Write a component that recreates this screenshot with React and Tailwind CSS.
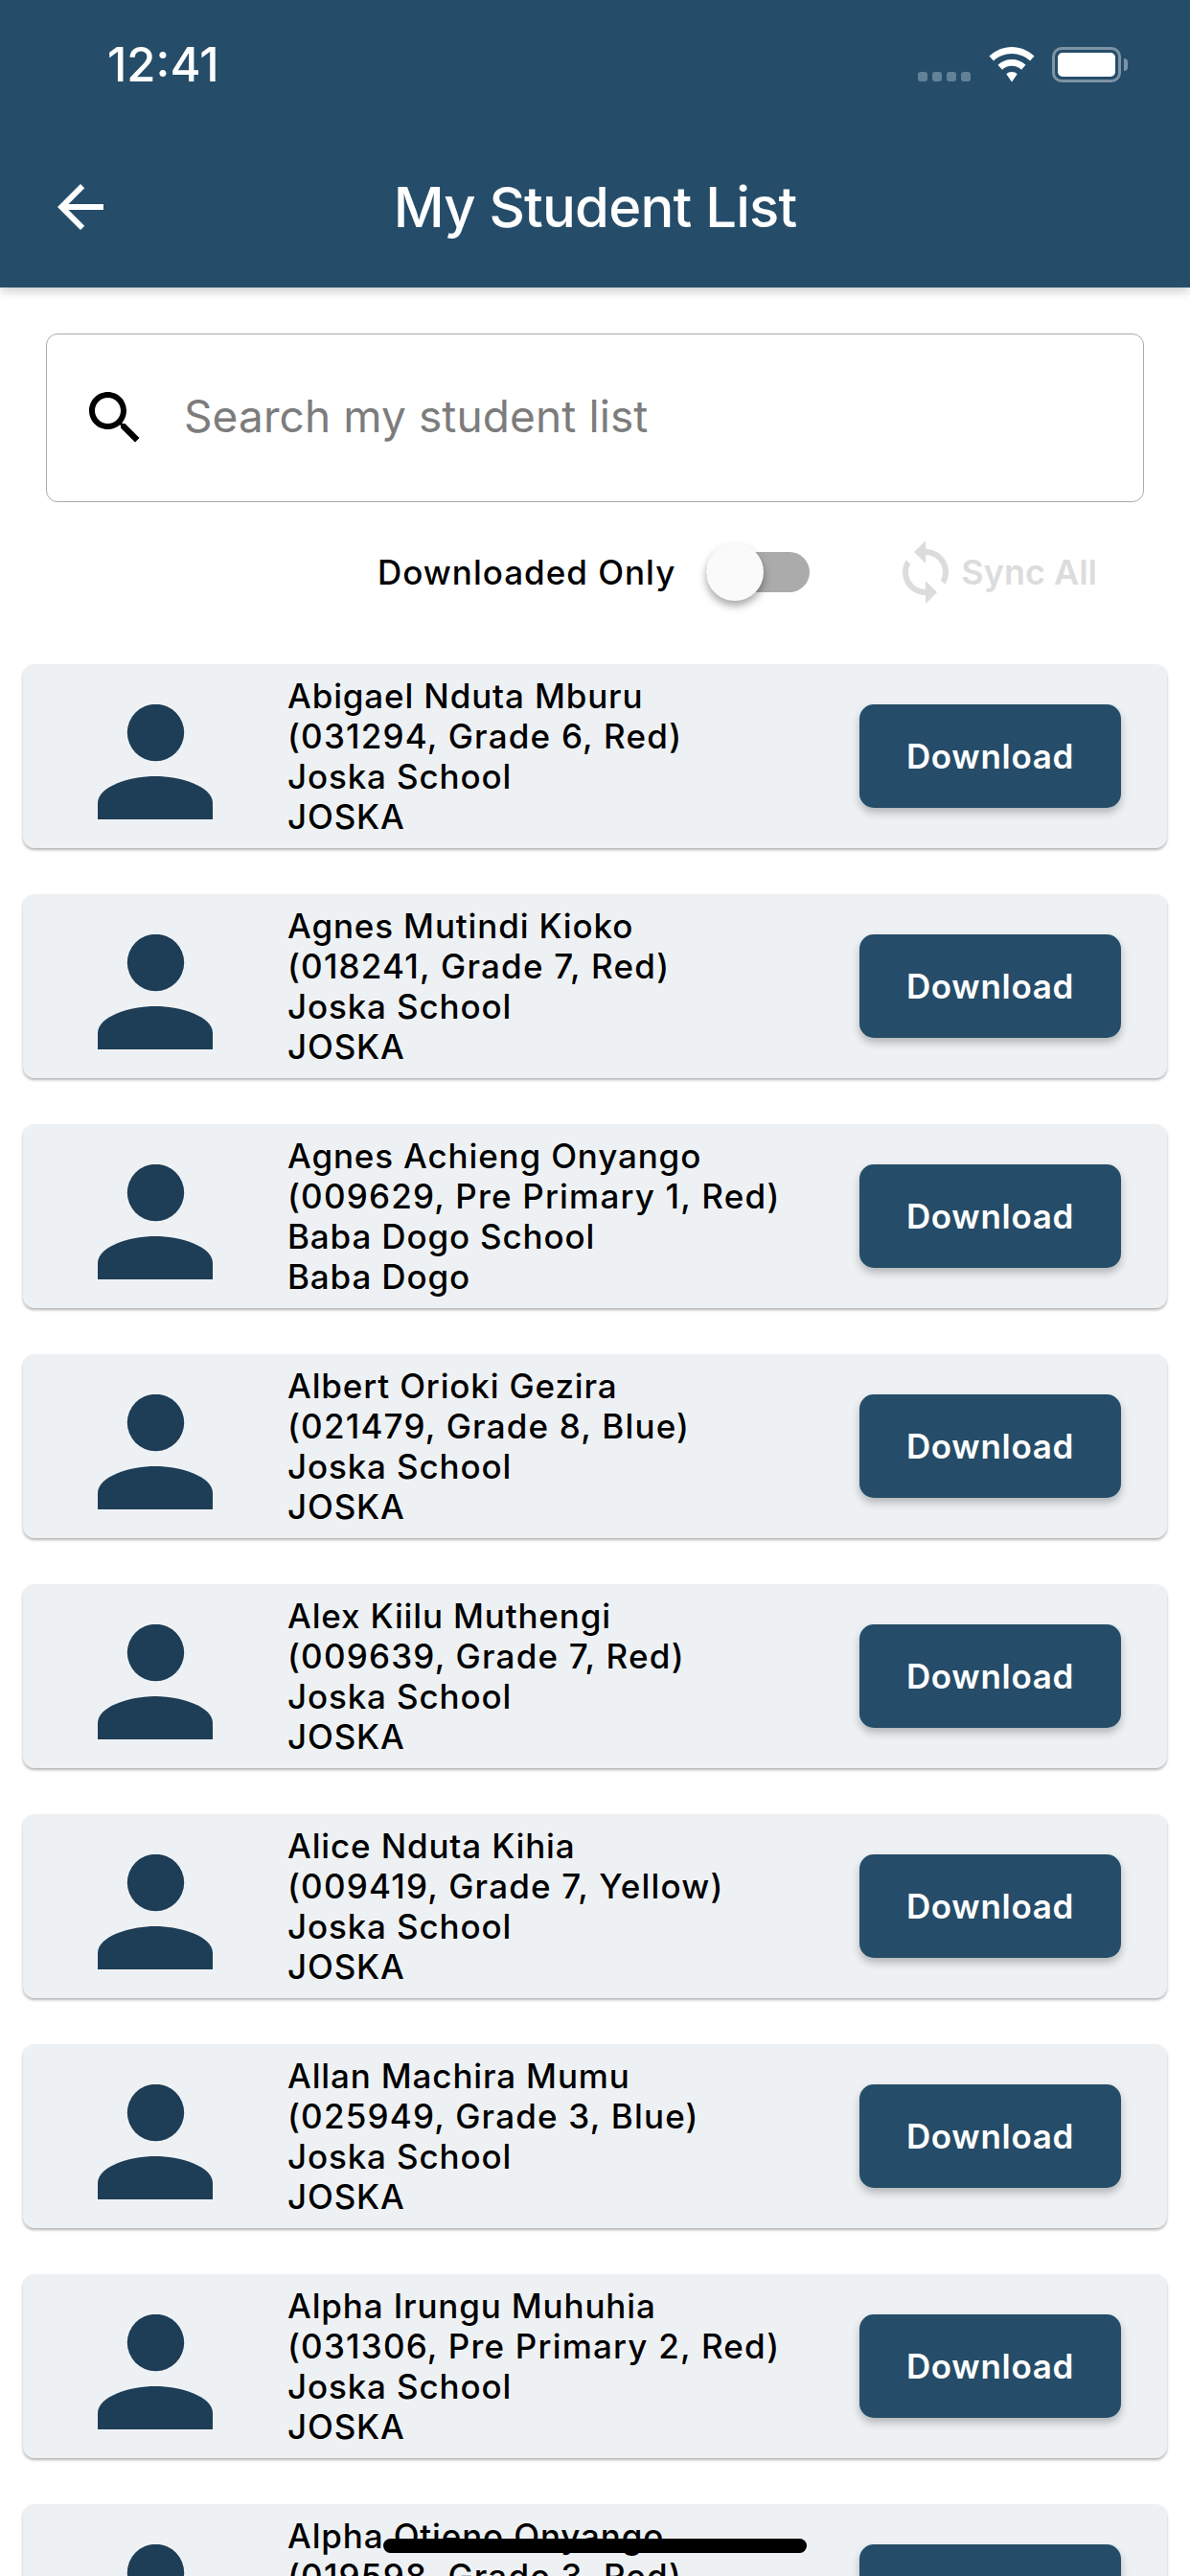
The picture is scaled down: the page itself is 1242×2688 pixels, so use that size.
const students = [
  ["Abigael Nduta Mburu", "(031294, Grade 6, Red)", "Joska School", "JOSKA"],
  ["Agnes Mutindi Kioko", "(018241, Grade 7, Red)", "Joska School", "JOSKA"],
  ["Agnes Achieng Onyango", "(009629, Pre Primary 1, Red)", "Baba Dogo School", "Baba Dogo"],
  ["Albert Orioki Gezira", "(021479, Grade 8, Blue)", "Joska School", "JOSKA"],
  ["Alex Kiilu Muthengi", "(009639, Grade 7, Red)", "Joska School", "JOSKA"],
  ["Alice Nduta Kihia", "(009419, Grade 7, Yellow)", "Joska School", "JOSKA"],
  ["Allan Machira Mumu", "(025949, Grade 3, Blue)", "Joska School", "JOSKA"],
  ["Alpha Irungu Muhuhia", "(031306, Pre Primary 2, Red)", "Joska School", "JOSKA"],
  ["Alpha Otieno Onyango", "(019598, Grade 3, Red)", "Joska School", "JOSKA"],
];

function StudentCard({ lines }) {
  return (
    <div className="flex h-[192px] shrink-0 items-center rounded-[12px] bg-[#eef1f4] pl-[78px] pr-[48px] shadow-[0_2px_3px_rgba(0,0,0,0.3)]">
      <svg width="120" height="120" viewBox="0 0 120 120" className="mt-[12px] shrink-0" fill="#1e3d56">
        <circle cx="60.5" cy="29.5" r="29.7" />
        <path d="M0 120V103C0 85 35 75 60 75C85 75 120 85 120 103V120Z" />
      </svg>
      <div className="ml-[78px] whitespace-nowrap font-['Inter',sans-serif] text-[35px] font-medium leading-[42px] tracking-[0.85px] text-black">
        <div>{lines[0]}</div>
        <div className="tracking-[1.2px]">{lines[1]}</div>
        <div>{lines[2]}</div>
        <div>{lines[3]}</div>
      </div>
      <div className="ml-auto flex h-[108px] w-[273px] shrink-0 items-center justify-center rounded-[15px] bg-[#254d69] font-['Inter',sans-serif] text-[35px] font-semibold tracking-[0.7px] text-white shadow-[0_5px_8px_rgba(0,0,0,0.25)]">
        Download
      </div>
    </div>
  );
}

export default function App() {
  return (
    <div className="relative flex h-[2688px] w-[1242px] flex-col overflow-hidden bg-white">
      <header className="relative z-10 flex h-[300px] shrink-0 flex-col bg-[#254d69] shadow-[0_4px_10px_rgba(0,0,0,0.2)]">
        <div className="flex h-[86px] items-end justify-between pl-[112px] pr-[65px] pt-[40px]">
          <span className="relative top-[5px] font-['Inter',sans-serif] text-[49px] font-medium leading-[46px] text-white">12:41</span>
          <div className="flex items-end">
            <div className="mb-[1px] mr-[19px] flex gap-[5px]">
              <span className="h-[10px] w-[10px] rounded-[3px] bg-[#638299]" />
              <span className="h-[10px] w-[10px] rounded-[3px] bg-[#638299]" />
              <span className="h-[10px] w-[10px] rounded-[3px] bg-[#638299]" />
              <span className="h-[10px] w-[10px] rounded-[3px] bg-[#638299]" />
            </div>
            <svg width="48" height="37" viewBox="0 0 48 37" fill="white" className="mr-[18px]">
              <path d="M24 0C15 0 7 3.600 0.500 9.500L5 14.500C10 9.800 16.800 7 24 7C31.200 7 38 9.800 43 14.500L47.500 9.500C41 3.600 33 0 24 0Z" />
              <path d="M24 13C18.500 13 13.500 15 9.500 18.800L14 23.700C16.600 21.200 20.200 19.800 24 19.800C27.800 19.800 31.400 21.200 34 23.700L38.500 18.800C34.500 15 29.500 13 24 13Z" />
              <path d="M24 26C21.800 26 19.800 26.800 18.300 28.200L24 36.500L29.700 28.200C28.200 26.800 26.200 26 24 26Z" />
            </svg>
            <div className="flex h-[37px] w-[72px] items-center justify-center rounded-[10px] border-[3px] border-[#7d94a5]">
              <div className="h-[25px] w-[60px] rounded-[5px] bg-white" />
            </div>
            <div className="mb-[12px] ml-[3px] h-[13px] w-[4px] rounded-r-[4px] bg-[#7d94a5]" />
          </div>
        </div>
        <div className="mt-[94px] grid grid-cols-[1fr_auto_1fr] items-center px-[48px]">
          <svg width="72" height="72" viewBox="0 0 24 24" fill="white">
            <path d="M20 11H7.830l5.590-5.590L12 4l-8 8 8 8 1.410-1.410L7.830 13H20v-2z" />
          </svg>
          <h1 className="font-['Inter',sans-serif] text-[58px] font-medium leading-[72px] tracking-[-0.8px] text-white">My Student List</h1>
          <div />
        </div>
      </header>

      <div className="mx-[48px] mt-[48px] flex h-[176px] shrink-0 items-center rounded-[12px] border-[1.5px] border-[#ababab] bg-white pl-[35px]">
        <svg width="72" height="72" viewBox="0 0 24 24" fill="black" className="shrink-0">
          <path d="M15.500 14h-.790l-.280-.270C15.410 12.590 16 11.110 16 9.500 16 5.910 13.090 3 9.500 3S3 5.910 3 9.500 5.910 16 9.500 16c1.610 0 3.090-.590 4.230-1.570l.270.280v.790l5 4.990L20.490 19l-4.990-5zm-6 0C7.010 14 5 11.990 5 9.500S7.010 5 9.500 5 14 7.010 14 9.500 11.990 14 9.500 14z" />
        </svg>
        <input
          readOnly
          placeholder="Search my student list"
          className="mb-[3px] ml-[36px] w-[800px] bg-transparent font-['Inter',sans-serif] text-[46px] tracking-[0.1px] text-black outline-none placeholder:text-[#7c7c7c]"
        />
      </div>

      <div className="mt-[40px] flex h-[66px] shrink-0 items-center justify-end pr-[97px]">
        <span className="font-['Inter',sans-serif] text-[35px] font-medium tracking-[1px] text-black">Downloaded Only</span>
        <div className="relative ml-[32px] h-[42px] w-[108px] rounded-full bg-[#ababab]">
          <div className="absolute left-0 top-[-9px] h-[60px] w-[60px] rounded-full bg-[#fafafa] shadow-[0_5px_8px_rgba(0,0,0,0.35)]" />
        </div>
        <svg width="72" height="72" viewBox="0 0 24 24" fill="#dcdcdc" className="ml-[85px] shrink-0">
          <path d="M12 4V1L8 5l4 4V6c3.310 0 6 2.690 6 6 0 1.010-.250 1.970-.700 2.800l1.460 1.460C19.540 15.030 20 13.570 20 12c0-4.420-3.580-8-8-8zm0 14c-3.310 0-6-2.690-6-6 0-1.010.250-1.970.700-2.800L5.240 7.740C4.460 8.970 4 10.430 4 12c0 4.420 3.580 8 8 8v3l4-4-4-4v3z" />
        </svg>
        <span className="ml-[1px] font-['Inter',sans-serif] text-[36px] font-semibold text-[#dcdcdc]">Sync All</span>
      </div>

      <div className="mx-[24px] mt-[63px] flex flex-col gap-[48px]">
        {students.map((s) => (
          <StudentCard key={s[0]} lines={s} />
        ))}
      </div>

      <div className="absolute left-[400px] top-[2649px] h-[15px] w-[442px] rounded-full bg-black" />
    </div>
  );
}
